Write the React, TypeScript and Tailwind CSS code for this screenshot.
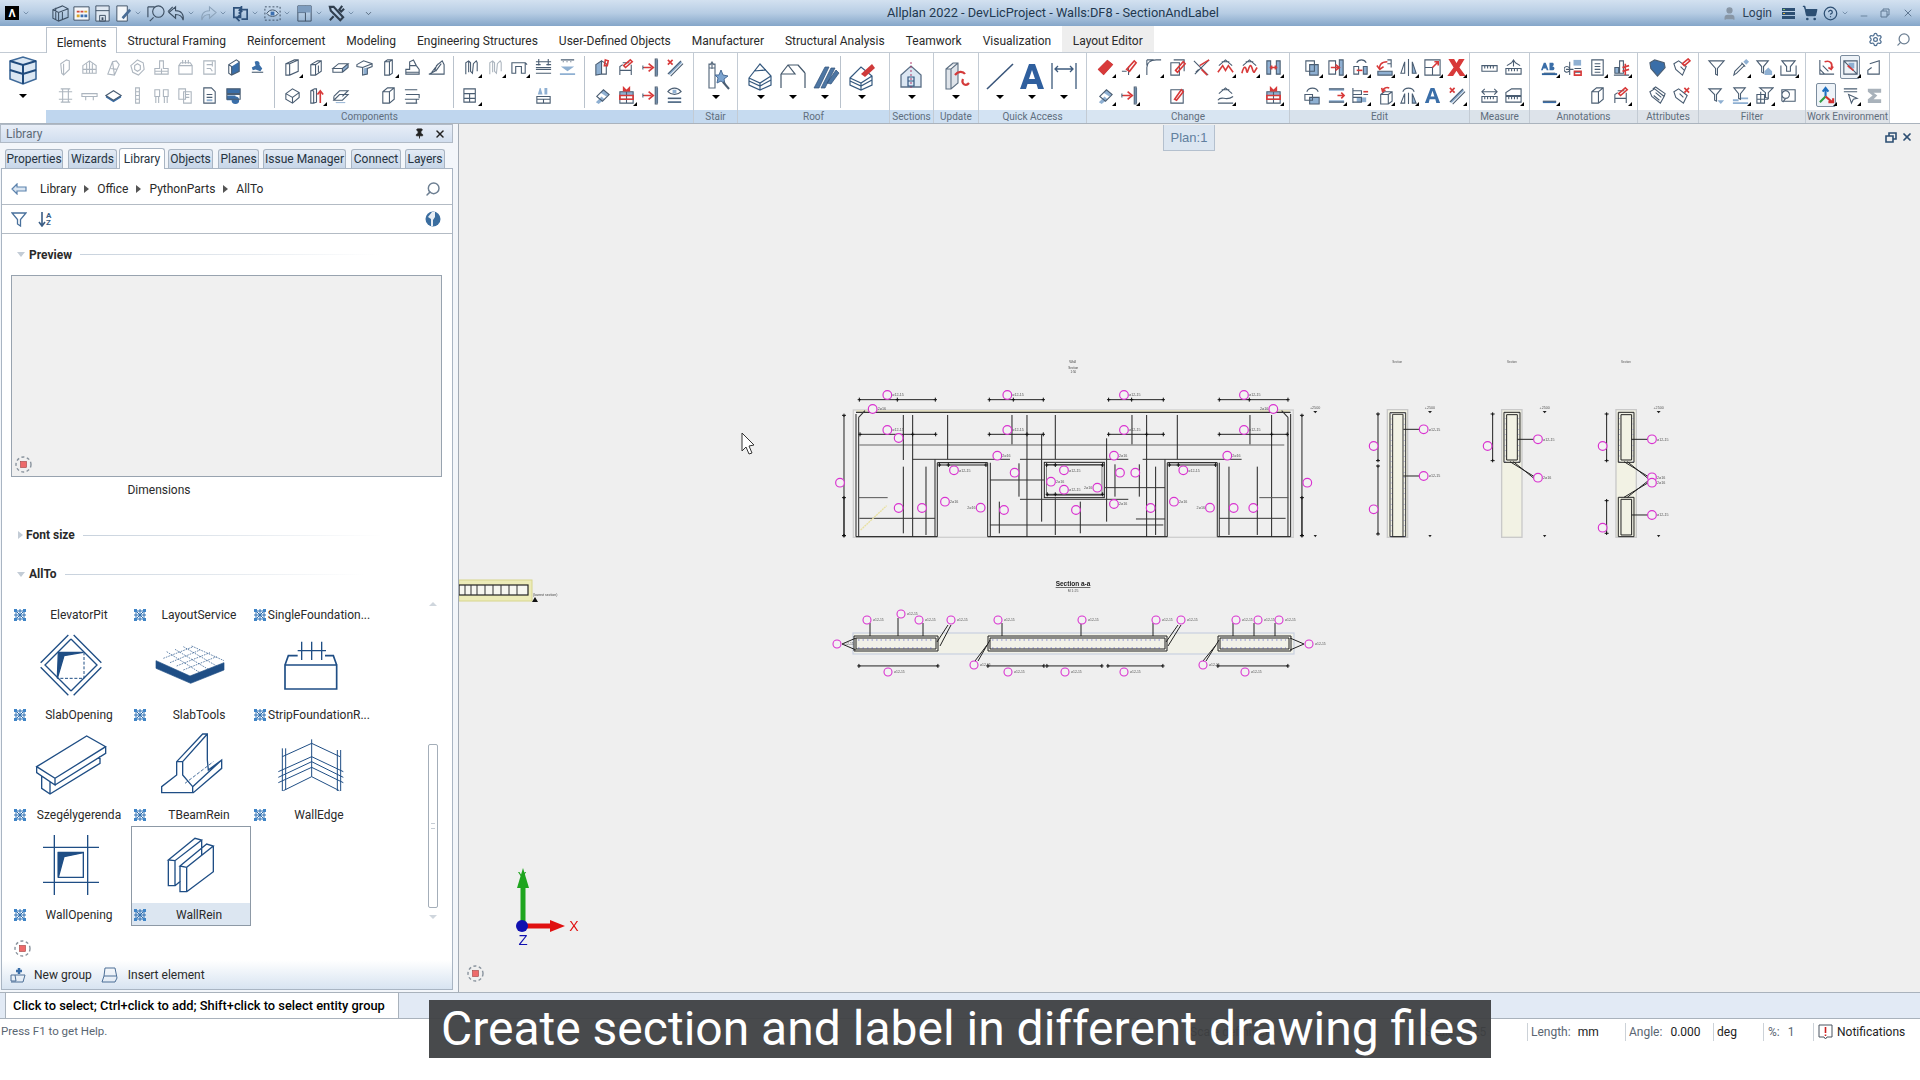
import { ReactNode } from 'react';
import { ChevronDown, Settings, Search, Pin, X, Minus, CircleHelp, ShoppingCart, User } from 'lucide-react';

// small ribbon glyphs, 20x20: [stroke, fill, red]
const ICONS: Record<string, [string, string?, string?]> = {
  wall: ['M6 16 L5 6 L11 2 L14 3 L14 12 L8 18 Z M8 6 L8 18'],
  rib: ['M3 8 L10 3 L17 8 V16 H3 Z M3 12 H17 M7 6 V16 M10 3 V16 M13 6 V16'],
  stair: ['M4 17 L9 4 L13 3 L16 7 L11 18 Z M9 4 L11 18 M7 11 L14 12'],
  ring: ['M10 2 L16 5 L17 12 L11 18 L5 15 L3 8 Z M10 6 L13 8 L13 12 L10 14 L7 12 L7 8 Z'],
  found: ['M8 3 V11 H3 V17 H17 V11 H12 V3 Z M3 14 H17 M10 11 V17'],
  box: ['M3 8 H17 V17 H3 Z M3 8 L5 5 H15 L17 8 M7 2 V6 M10 2 V6 M13 2 V6'],
  doc: ['M4 3 H16 V17 H4 Z M7 7 H13 M7 11 H11 L13 14 M13 4 V9'],
  block: ['M5 7 L13 2 L16 4 V14 L8 18 L5 16 Z M5 7 L8 9 V18', 'M8 9 L16 4 V14 L8 18 Z'],
  seal: ['M4 15 H16', 'M7 4 C10 2 13 4 12 7 L15 11 L13 14 L8 12 L5 13 L4 10 L8 8 Z'],
  column: ['M5 3 H15 M5 17 H15 M7 3 V17 M13 3 V17 M3 6 H17 M3 14 H17'],
  beam: ['M2 8 H18 V11 H2 Z M6 11 V15 M14 11 V15'],
  plate: ['M2 10 L10 5 L18 10 L10 15 Z', 'M2 10 L10 15 L18 10 L18 12 L10 17 L2 12 Z'],
  pole: ['M8 2 H12 V18 H8 Z M8 6 H12 M8 10 H12 M8 14 H12'],
  piles: ['M3 4 H8 V11 H3 Z M12 4 H17 V11 H12 Z M4 11 V18 M7 11 V18 M13 11 V18 M16 11 V18'],
  docs: ['M3 3 H10 V14 H3 Z M8 6 H16 V18 H8 Z M10 9 H14 M10 12 H14'],
  sheet: ['M4 2 H12 L16 6 V18 H4 Z M7 9 H13 M7 12 H13', 'M7 14 H13 V16 H7 Z'],
  db: ['M3 3 H17 V8 H3 Z M3 9 H17 V14 H3 Z', 'M3 3 H17 V8 H3 Z M3 10 H12 V15 H3 Z M12 11 A4 4 0 1 1 12 19 A4 4 0 1 1 12 11 Z'],
  wallBox: ['M3 6 L12 2 H16 V14 L7 18 H3 Z M3 6 H7 V18 M7 6 L16 2'],
  doors: ['M4 7 L11 3 H15 V14 L9 18 H4 Z M9 7 V18 M4 7 H9 L15 3 M12 8 V15'],
  slab: ['M2 11 L8 6 H18 L12 11 Z M2 11 V15 H12 V11 M12 15 L18 10 V6', 'M12 11 L18 6 V10 L12 15 Z'],
  tee: ['M2 7 L9 3 L18 6 L18 9 L13 11 V17 L8 18 V10 L2 9 Z M8 10 L18 6', 'M9 11 L13 10 V17 L9 18 Z'],
  tall: ['M6 4 L9 2 H14 V16 L11 18 H6 Z M11 4 V18 M6 4 H11 L14 2'],
  house: ['M3 12 L7 12 L7 4 L11 2 L14 8 L17 12 V17 H3 Z M7 8 H14 M3 15 H17'],
  stairs: ['M2 17 L8 14 L10 8 L16 3 L18 7 V17 Z M5 15 L12 6 M9 14 L15 6'],
  ushape: ['M4 17 V5 L7 3 L9 5 V14 L11 16 L12 6 L15 3 L16 5 V14 M7 3 V15'],
  arch: ['M2 5 H16 V16 H12 V9 H6 V16 H2 Z M16 5 L18 7'],
  span: ['M2 4 H18 M2 16 H18 M2 10 H18 M5 1 V8 M15 1 V8 M7 7 L2 7 M13 7 L18 7 M2 12 H18'],
  dots: ['M3 2 H17 M5 4 H6 M9 4 H10 M13 4 H14', 'M3 9 H17 L10 14 Z M2 16 H18 V18 H2 Z'],
  cube: ['M3 8 L10 3 L17 7 L17 12 L10 18 L3 14 Z M3 8 L10 12 L17 7 M10 12 V18'],
  up: ['M4 5 L8 3 H10 V17 L7 18 H4 Z M7 5 V18 M4 5 H7', undefined, 'M14 18 V6 M11 9 L14 5 L17 9'],
  slabEdit: ['M3 15 L9 9 H18 L12 15 Z M3 11 L9 5 H18 L12 11 M3 11 V15', 'M5 17 H15 V18 H5 Z'],
  boxBig: ['M4 6 L9 2 H16 V14 L11 18 H4 Z M11 6 V18 M4 6 H11 L16 2'],
  layer: ['M2 4 H15 M3 9 H17 V13 M2 14 H17 M14 14 L14 18 M3 18 H15'],
  corner: ['M2 3 H14 V17 H2 Z M2 8 H14 M2 13 H14 M8 8 V17'],
  abc: ['M3 11 H17 V18 H3 Z M3 14 H17 M10 14 V18', 'M4 9 L6 2 H7 L9 9 Z M11 2 H14 V9 H11 Z'],
  colorWall: ['M3 7 L9 3 V17 L3 18 Z M9 3 L14 6 V17 H9', 'M3 7 L9 3 V17 L3 18 Z', 'M13 2 L16 3 L15 8 L12 8 Z'],
  hammer: ['M3 18 V9 L6 7 M15 18 V7 M3 13 H15 M6 5 H13', undefined, 'M7 8 L14 2 L16 4 L9 10 Z'],
  arrowBar: ['M15 1 H17 V19 H15 Z M2 10 H4 M6 10 H8 M2 8 V12', 'M15 2 H18 V18 H15 Z', 'M3 10 H11 M8 6 L13 10 L8 14'],
  xDiag: ['M3 17 L17 3 M6 19 L19 6', 'M3 16 L16 3 L18 5 L5 18 Z', 'M3 2 L8 7 M8 2 L3 7'],
  brush: ['M4 11 L11 4 L17 9 L10 16 Z', 'M3 17 L9 11 L12 14 L6 19 Z M11 4 L17 9 L14 11 L8 7 Z'],
  colors: ['M3 6 H17 V18 H3 Z M3 10 H17 M3 14 H17 M10 6 V18', 'M3 6 H17 V10 H3 Z', 'M7 2 L10 5 L13 2 V5 H7 Z M3 10 H17 V14 H3 Z'],
  eye: ['M3 6 C7 1 13 1 17 6 C13 10 7 10 3 6 Z M3 13 H17 M3 17 H17', 'M3 12 H17 V14 H3 Z M3 16 H17 V18 H3 Z M8 4 H12 V8 H8 Z', undefined],
  eraser: ['M3 12 L12 3 L17 7 L8 17 Z', undefined, 'M3 12 L12 3 L17 7 L8 17 Z'],
  pinRed: ['M2 14 L7 14 M9 9 V18', undefined, 'M7 12 L15 3 L17 5 L10 14 Z'],
  fillet: ['M3 18 V10 C3 5 7 2 13 2 H18 M3 2 H10 M3 2 V8'],
  boxRed: ['M3 5 H12 V18 H3 Z M6 2 H17 V14', undefined, 'M8 13 L16 4 L18 6 L10 15 Z'],
  scissor: ['M2 3 L17 18 M18 2 L3 17 M7 12 L4 15', undefined, 'M8 8 L18 2 M10 12 L16 18'],
  hatRed: ['M6 4 H14 M3 8 L10 2 L17 8', undefined, 'M2 15 L7 8 L10 13 L13 8 L18 15'],
  hatWave: ['M6 4 H14 M3 8 L10 2 L17 8', undefined, 'M2 16 C4 8 6 8 7 14 C8 18 9 8 11 8 C13 8 13 15 15 15 L18 10'],
  hBeam: ['M3 3 H7 V17 H3 Z M13 3 H17 V17 H13 Z', 'M3 3 H7 V17 H3 Z M13 3 H17 V17 H13 Z', 'M6 10 H14 M8 8 V12 M12 8 V12'],
  pencilBox: ['M3 4 H16 V18 H3 Z', undefined, 'M7 14 L14 4 L16 6 L9 15 Z'],
  hatWave2: ['M3 8 L10 2 L17 8 M6 4 H14 M2 18 H18 M2 15 C6 9 10 17 18 11'],
  copy: ['M3 3 H12 V14 H3 Z M7 7 H16 V18 H7 Z', 'M7 7 H16 V18 H7 Z'],
  dashMove: ['M2 3 H9 V17 H2 Z M13 2 H17 V18 H13 Z', 'M13 2 H17 V18 H13 Z', 'M4 10 H12 M9 7 L13 10 L9 13'],
  hatArrow: ['M6 5 C8 1 14 1 16 5 M3 9 H8 V17 H3 Z M13 9 H17 V17 H13 Z', 'M13 9 H17 V17 H13 Z', 'M6 13 H12'],
  rotate: ['M13 2 H17 V10 M13 6 H17 M3 14 H18 V18 H3 Z', 'M3 14 H18 V18 H3 Z', 'M13 4 C6 4 4 8 5 12 M2 8 L5 12 L9 9'],
  mirror: ['M10 1 V19 M14 4 V16 H18 Z M6 4 V16 H2 Z', 'M14 4 V16 H18 Z'],
  scale: ['M2 2 H18 V18 H2 Z M2 10 H10 V18', undefined, 'M10 10 L16 4 M12 4 H16 V8'],
  bigX: ['', undefined, 'M3 2 L7 2 L10 7 L13 2 L17 2 L12 10 L18 18 L14 18 L10 12 L6 18 L2 18 L8 10 Z'],
  copyHat: ['M4 6 C6 1 14 1 16 6 M2 9 H10 V15 H2 Z M7 12 H17 V19 H7 Z', 'M7 12 H17 V19 H7 Z'],
  moveH: ['M2 3 H18 M2 17 H18', 'M2 3 H18 V5 H2 Z M2 15 H18 V17 H2 Z', 'M11 10 H18 M15 7 L18 10 L15 13'],
  splitH: ['M2 2 V18 M2 5 H11 V9 H2 M2 12 H11 V17 H2 M18 9 H13', 'M6 12 H16 V17 H6 Z', 'M13 6 H18'],
  cubeRot: ['M6 9 L10 6 H18 V16 L14 19 H6 Z M14 9 V19 M6 9 H14 L18 6', undefined, 'M8 5 C9 2 12 1 15 2 M7 2 L8 6 L11 4'],
  mirrorHat: ['M4 6 C6 1 14 1 16 6 M10 7 V19 M14 8 V18 H18 Z M6 8 V18 H2 Z', 'M14 8 V18 H18 Z'],
  bigA: ['', 'M2 18 L8 2 H12 L18 18 H14 L13 14 H7 L6 18 Z M8 11 H12 L10 5 Z'],
  ruler: ['M2 8 H18 V14 H2 Z M5 8 V11 M8 8 V11 M11 8 V11 M14 8 V11'],
  rulerUp: ['M2 11 H18 V17 H2 Z M5 11 V14 M8 11 V14 M11 11 V14 M14 11 V14 M10 9 V3 M8 5 L10 2 L12 5 M3 8 L8 5 M17 8 L12 5'],
  rulerSpan: ['M2 11 H18 V17 H2 Z M5 11 V14 M8 11 V14 M11 11 V14 M14 11 V14 M2 6 H18 M5 3 L2 6 L5 9 M15 3 L18 6 L15 9'],
  area: ['M2 11 H18 V17 H2 Z M5 11 V14 M8 11 V14 M11 11 V14 M14 11 V14 M2 10 V7 L8 3 H18 V10 Z'],
  abcT: ['M4 16 H16', 'M1 13 L4 5 H6 L9 13 H7 L6.5 11 H3.5 L3 13 Z M10 5 H13 C15 5 15 8 13 9 C16 9 16 13 13 13 H10 Z'],
  abcPin: ['M6 4 V18 M2 12 H10 M6 12 A3 3 0 1 1 6 11.9 M11 15 H18 M11 11 H18', 'M10 2 H18 V8 H10 Z', 'M11 14 H18 V18 H11 Z'],
  docLines: ['M4 2 H16 V18 H4 Z M7 6 H13 M7 9 H13 M7 12 H13 M7 15 H13'],
  chart: ['M2 18 H18 M3 10 H7 V16 H3 Z M8 3 H12 V16 H8 Z', 'M3 10 H7 V16 H3 Z', 'M14 6 V18 M11 14 L18 12 M11 10 L18 8'],
  n123: ['M3 16 H17', 'M3 16 H17 V18 H3 Z'],
  tagPlus: ['M2 5 L7 2 L17 5 L18 10 L10 19 L3 11 Z', 'M2 5 L7 2 L17 5 L18 10 L10 19 L3 11 Z'],
  tagRed: ['M2 6 L7 3 L15 9 L11 18 L4 12 Z M9 9 L13 13', undefined, 'M11 6 L17 1 L19 3 L13 8 Z'],
  tags: ['M2 6 L7 3 L17 11 L13 18 L4 11 Z M5 3 L8 1 L18 8 L17 11 M8 7 L14 12 M6 10 L12 15'],
  tagX: ['M2 6 L7 3 L16 10 L12 18 L4 12 Z M8 8 L12 12', undefined, 'M13 2 L18 7 M18 2 L13 7'],
  f: ['M2 3 H18 L11 11 V18 L9 17 V11 Z'],
  dropper: ['M3 18 L4 14 L12 6 L14 8 L6 16 Z M11 5 L15 9', 'M13 4 L16 1 L19 4 L16 7 Z'],
  home: ['M2 3 H14 L9 9 V16 L7 15 V9 Z', 'M10 14 L14 10 L18 14 V18 H10 Z'],
  fTray: ['M3 3 H17 L12 9 V14 H8 V9 Z M2 8 V18 H18 V8'],
  fDown: ['M2 3 H15 L10 9 V16 L8 15 V9 Z', 'M11 15 H18 L14.5 19 Z'],
  fStack: ['M3 2 H15 L10 8 V14 L8 13 V8 Z', 'M2 14 H8 V16 H2 Z M10 12 H18 V14 H10 Z M2 17 H18 V19 H2 Z'],
  fBox: ['M5 2 H19 L14 7 V13 L11 12 V7 Z M2 9 H10 V18 H2 Z M6 6 V18 M2 14 H14'],
  fSearch: ['M3 16 V4 H12 M3 4 H17 V16 H3 M7 13 A4 4 0 1 1 7.1 13 M4 17 L7 13'],
  cornerRot: ['M3 2 V17 H18 M3 12 L8 17 M6 8 L12 14', undefined, 'M8 4 C14 2 17 6 15 11 M12 10 L15 12 L17 9'],
  zoomBox: ['M3 3 H17 V17 H3 Z M3 3 L17 17', 'M8 5 H14 V11 H8 Z', 'M7 8 L13 13'],
  eyeShape: ['M5 6 L15 3 V17 H3 V13 L7 10'],
  axes: ['', '', ''],
  cursor: ['M3 3 H17 M3 6 H17 M8 9 L11 18 L13 14 L17 13 Z'],
  sigma: ['', 'M3 3 H17 V7 H9 L13 10 L9 14 H17 V18 H3 V14 L8 10 L3 6 Z'],
};

const DARK_FILL = ['block', 'seal', 'db', 'plate', 'abcT', 'n123', 'bigA', 'sigma', 'tagPlus'];

function Ico({ n, size = 19, faded = false }: { n: string; size?: number; faded?: boolean }) {
  const [d, f, r] = ICONS[n] ?? [''];
  const fill = n === 'sigma' ? '#a9b2bb' : DARK_FILL.includes(n) ? '#3a6ea8' : '#8fb0d2';
  return (
    <svg width={size} height={size} viewBox="0 0 20 20" fill="none" className={faded ? 'opacity-45' : ''}>
      {f && <path d={f} fill={fill} />}
      {d && <path d={d} stroke="#4a5d72" strokeWidth="1.15" />}
      {r && <path d={r} stroke="#d83a3a" strokeWidth="1.7" fill={n === 'bigX' || n === 'eraser' ? '#d83a3a' : 'none'} />}
      {n === 'abcT' && <path d="M2 17 H18" stroke="#30639c" strokeWidth="2" />}
      {n === 'axes' && (
        <g strokeWidth="2.2">
          <path d="M9 11 V3 M6 6 L9 2 L12 6" stroke="#1f6fbf" />
          <path d="M9 11 L3 17" stroke="#2f9e44" />
          <path d="M9 11 L16 17 M12 17 H17 V13" stroke="#d32f2f" />
        </g>
      )}
    </svg>
  );
}

function Cell({ spec }: { spec: string }) {
  const drop = spec.endsWith('*');
  const faded = spec.startsWith('~');
  const n = spec.replace(/[~*!]/g, '');
  const active = spec.includes('!');
  return (
    <div className="relative w-[24px] h-[28px] flex items-center justify-center">
      {active && <div className="absolute inset-[2px] rounded-[2px] border border-[#7b8c9e] bg-[#eef3f8]" />}
      {n && (
        <div className="relative">
          <Ico n={n} faded={faded} />
        </div>
      )}
      {drop && <span className="absolute right-[1px] bottom-[3px] w-0 h-0 border-l-[4px] border-b-[4px] border-l-transparent border-b-black" />}
    </div>
  );
}

function Grid({ cols, items }: { cols: string; items: string[] }) {
  return (
    <div className={`grid ${cols} auto-rows-[28px] shrink-0`}>
      {items.map((s, i) => (
        <Cell key={i} spec={s} />
      ))}
    </div>
  );
}

const Sep = () => <div className="w-px h-[52px] mx-[5px] mt-[3px] bg-[#b9c2cc] shrink-0" />;

const BIG: Record<string, ReactNode> = {
  stair: (
    <>
      <path d="M8 3 H14 V27 H8 Z M8 7 H14 M11 1 V8 M9 4 L11 1 L13 4" stroke="#5d6f82" strokeWidth="1.2" />
      <path d="M20 9 L22 14 L27 15 L23 18 L24 23 L20 20 L16 22 L17 17 L14 14 L18 14 Z" fill="#7ba3cf" stroke="#4a6d96" />
      <path d="M22 21 L28 28" stroke="#4a5d72" strokeWidth="2" />
    </>
  ),
  roof1: <path d="M3 17 L14 3 L25 15 V24 L14 29 L3 24 Z M3 17 L14 22 L25 15 M14 22 V29 M3 20 L14 25 L25 19 M8 10 L20 9" stroke="#35597f" strokeWidth="1.2" />,
  roof2: <path d="M3 13 L10 4 H20 L27 12 M3 13 V27 M27 12 V27 M10 4 L17 13 L3 13 M20 4 L27 12" stroke="#44586c" strokeWidth="1.2" />,
  roof3: <path d="M4 27 L15 6 H19 L9 27 Z M11 27 L21 7 H25 L15 27 Z M17 22 L26 9 L29 12 L21 23 Z" fill="#4d76a3" stroke="#2f5078" strokeWidth=".7" />,
  roof4: (
    <>
      <path d="M3 17 L14 6 L25 15 V24 L14 29 L3 24 Z M3 17 L14 22 L25 15 M14 22 V29 M3 20 L14 25 L25 19" stroke="#35597f" strokeWidth="1.2" />
      <path d="M14 13 L25 3 L28 7 L18 16 Z" fill="#cf3a3a" />
    </>
  ),
  section: (
    <>
      <path d="M4 14 L14 5 L24 14 V26 H4 Z" fill="#dbe6f2" stroke="#5a6f86" strokeWidth="1.3" />
      <path d="M14 1 V29" stroke="#b03a6a" strokeWidth="1" strokeDasharray="2 2" />
      <path d="M11 16 H17 V25 H11 Z M11 20 H17" stroke="#31557f" strokeWidth="1.2" />
    </>
  ),
  update: (
    <>
      <path d="M5 8 L12 2 H17 V22 L10 28 H5 Z M10 8 V28 M5 8 H10 L17 2" fill="#dfe4ea" stroke="#5d6f82" strokeWidth="1.1" />
      <path d="M14 14 C17 10 22 10 24 13 M22 18 C20 23 25 26 28 22" stroke="#d43a3a" strokeWidth="2.2" />
    </>
  ),
  line: <path d="M2 28 L28 3" stroke="#39557a" strokeWidth="1.6" />,
  textA: <path d="M3 28 L12 3 H18 L27 28 H21 L19.5 23 H10.5 L9 28 Z M12 18 H18 L15 9 Z" fill="#2f5f9e" />,
  dim: <path d="M3 2 V28 M27 2 V28 M6 8 H24 M9 5 L6 8 L9 11 M21 5 L24 8 L21 11" stroke="#3d5a7c" strokeWidth="1.3" />,
};

function BigCell({ n }: { n: string }) {
  return (
    <div className="w-[32px] flex flex-col items-center pt-[8px] shrink-0">
      <svg width="30" height="30" viewBox="0 0 30 30" fill="none">{BIG[n]}</svg>
      <span className="mt-[4px] w-0 h-0 border-x-[4px] border-t-[4px] border-x-transparent border-t-black" />
    </div>
  );
}

function Group({ label, w, bg, pl, children }: { label: string; w: string; bg: string; pl: string; children: ReactNode }) {
  return (
    <div className={`${w} flex flex-col border-r border-[#c3cbd4] shrink-0`}>
      <div className={`h-[58px] flex ${pl}`}>{children}</div>
      <div className={`h-[13px] ${bg} text-center text-[10px] leading-[13px] text-[#5f6e7d]`}>{label}</div>
    </div>
  );
}

const TABS = ['Structural Framing', 'Reinforcement', 'Modeling', 'Engineering Structures', 'User-Defined Objects', 'Manufacturer', 'Structural Analysis', 'Teamwork', 'Visualization'];

function TitleBar() {
  const tool = (node: ReactNode, caret: boolean, key: number) => (
    <div key={key} className={`flex items-center ${caret ? 'w-[32px]' : 'w-[21px]'}`}>
      <div className="w-[21px] flex justify-center">{node}</div>
      {caret && <ChevronDown size={8} className="text-[#5b7693]" />}
    </div>
  );
  const s = (d: ReactNode) => (
    <svg width="19" height="19" viewBox="0 0 20 20" fill="none">{d}</svg>
  );
  const items: [ReactNode, boolean][] = [
    [s(<path d="M2 6 L12 2 L18 5 V14 L8 18 L2 15 Z M2 6 L8 9 L18 5 M8 9 V18 M5 4 V16 M12 7 V16" stroke="#3e5064" strokeWidth="1.1" />), false],
    [s(<><path d="M2 3 H18 V17 H2 Z" fill="#f4f7fa" stroke="#3e5064" /><path d="M5 7 H8 V9 H5 Z M9 7 H12 V9 H9 Z" fill="#d04a3a" /><path d="M13 7 H16 V9 H13 Z M5 11 H8 V14 H5 Z" fill="#d9a52b" /><path d="M9 11 H12 V14 H9 Z M13 11 H16 V14 H13 Z" fill="#3b6fb0" /></>), false],
    [s(<><path d="M3 2 H17 V18 H3 Z" fill="#dfe8f2" stroke="#3e5064" /><path d="M3 7 H17 M7 12 H13 V18 H7 Z" stroke="#3e5064" /><path d="M9 14 H11 V17 H9 Z" fill="#3e5064" /></>), false],
    [s(<><path d="M3 2 H14 V18 H3 Z" fill="#f4f7fa" stroke="#3e5064" /><path d="M8 14 L16 5 L18 7 L10 16 Z" fill="#4a6d96" /></>), true],
    [s(<path d="M4 18 L8 14 M13 8 m-6 0 a6 6 0 1 0 12 0 a6 6 0 1 0 -12 0 M2 3 H9 M2 3 V14" stroke="#3e5064" strokeWidth="1.2" />), false],
    [s(<path d="M9 3 L2 9 L9 15 V11 C13 11 16 13 17 17 C18 11 15 7 9 7 Z M6 3 L1 8" stroke="#3e5064" strokeWidth="1.2" />), true],
    [s(<path d="M11 3 L18 9 L11 15 V11 C7 11 4 13 3 17 C2 11 5 7 11 7 Z" stroke="#8ca3ba" strokeWidth="1.1" />), true],
    [s(<path d="M3 4 H10 V14 H3 Z M11 6 H17 V16 H11 M11 2 V8 M8 10 L11 8 L8 6 M9 18 L6 15 L9 12" stroke="#2e517b" strokeWidth="1.8" />), true],
    [s(<><path d="M2 3 H18 V17 H2 Z" stroke="#3e5064" strokeDasharray="2 2" /><path d="M4 10 C7 5 13 5 16 10 C13 14 7 14 4 10 Z" fill="#cfe0f0" stroke="#3e5064" /><path d="M8 8 H12 V12 H8 Z" fill="#3b6fb0" /></>), true],
    [s(<><path d="M3 2 H17 V18 H3 Z M3 9 H11 M11 2 V18" stroke="#3e5064" /><path d="M3 2 H17 V9 H3 Z" fill="#7e9dbf" /></>), true],
    [s(<path d="M3 3 L7 3 L17 14 L14 17 L4 7 Z M16 2 L13 6 L15 8 L18 5 M7 13 L3 17" stroke="#303e4e" strokeWidth="2.2" />), true],
    [<ChevronDown size={9} className="text-[#3e5064]" />, false],
  ];
  return (
    <div className="h-[26px] flex items-center bg-gradient-to-b from-[#d3e1f0] via-[#b7cde4] to-[#85a6c9] text-[#22384f]">
      <div className="w-[887px] flex items-center shrink-0">
        <div className="ml-[5px] w-[14px] h-[14px] bg-black flex items-center justify-center text-white text-[11px] leading-none font-bold">Λ</div>
        <ChevronDown size={8} className="ml-[3px] text-[#5b7693]" />
        <div className="ml-[20px] flex items-center">{items.map((it, i) => tool(it[0], it[1], i))}</div>
      </div>
      <div className="text-[12.8px]">Allplan 2022 - DevLicProject - Walls:DF8 - SectionAndLabel</div>
      <div className="flex-1 flex items-center justify-end text-[#2c4156]">
        <User size={15} fill="#8896a5" className="text-[#8896a5] mr-[5px]" />
        <span className="text-[12px] mr-[9px]">Login</span>
        <svg width="15" height="15" viewBox="0 0 15 15" className="mr-[6px]"><path d="M1 2 H14 V5 H1 Z M1 6 H14 V9 H1 Z M1 10 H14 V13 H1 Z" fill="#2d4f73" /><path d="M2 3 H4 V4 H2 Z" fill="#7fc16a" /><path d="M2 7 H4 V8 H2 Z" fill="#e0b23a" /></svg>
        <ShoppingCart size={16} className="text-[#2d4f73] mr-[5px]" fill="#2d4f73" />
        <CircleHelp size={15} className="text-[#2d4f73]" />
        <ChevronDown size={8} className="ml-[3px] mr-[10px] text-[#5b7693]" />
        <Minus size={10} className="mr-[11px] mt-[6px] text-[#5f7893]" />
        <svg width="10" height="10" viewBox="0 0 10 10" fill="none" className="mr-[12px]"><path d="M1 3 H7 V9 H1 Z M3 3 V1 H9 V7 H7" stroke="#5f7893" /></svg>
        <X size={12} className="mr-[6px] text-[#5f7893]" />
      </div>
    </div>
  );
}

function Ribbon() {
  return (
    <div className="flex flex-col">
      <div className="h-[26px] flex pl-[46px] items-end bg-white text-[12px] text-[#2a2a2a]">
        <div className="h-[26px] w-[71px] pt-[4px] flex items-center justify-center border-x border-t border-[#b9c2cc] bg-white relative z-10 -mb-px">Elements</div>
        {TABS.map((t) => (
          <div key={t} className="h-[26px] pt-[4px] px-[10.5px] flex items-center">{t}</div>
        ))}
        <div className="h-[26px] w-[92px] pt-[4px] flex items-center justify-center bg-[#eeeeee]">Layout Editor</div>
        <div className="ml-auto h-[26px] flex items-center pr-[9px]">
          <Settings size={15} className="text-[#4f6f92] mr-[13px]" />
          <Search size={15} className="text-[#6c7f93] -scale-x-100" />
        </div>
      </div>
      <div className="flex border-t border-[#c3cbd4] h-[71px]">
        <div className="w-[46px] flex flex-col items-center shrink-0">
          <svg width="32" height="30" viewBox="0 0 32 30" fill="none" className="mt-[2px]">
            <path d="M3 6 L16 2 L29 6 V24 L16 29 L3 24 Z" fill="#dbe7f3" stroke="#3f6a9a" strokeWidth="1.6" />
            <path d="M3 6 L16 10 L29 6 M16 10 V29 M3 15 L16 19 L29 15" stroke="#1f4a7c" strokeWidth="2" />
          </svg>
          <span className="mt-[9px] w-0 h-0 border-x-[4px] border-t-[4px] border-x-transparent border-t-black" />
        </div>
        <Group label="Components" w="w-[648px]" bg="bg-[#bfd6ee]" pl="pl-[7px]">
          <Grid cols="grid-cols-[repeat(9,24px)]" items={['~wall', '~rib', '~stair', '~ring', '~found', '~box', '~doc', 'block', 'seal', '~column', '~beam', 'plate', '~pole', '~piles', '~docs', 'sheet', 'db', '']} />
          <Sep />
          <Grid cols="grid-cols-[repeat(7,24px)]" items={['wallBox*', 'doors', 'slab', 'tee', 'tall*', 'house', 'stairs', 'cube', 'up*', 'slabEdit', '', 'boxBig', 'layer', '']} />
          <Sep />
          <Grid cols="grid-cols-[repeat(5,24px)]" items={['ushape*', '~ushape*', 'arch*', 'span', 'dots', 'corner*', '', '', 'abc', '']} />
          <Sep />
          <Grid cols="grid-cols-[repeat(4,24px)]" items={['colorWall', 'hammer', 'arrowBar', 'xDiag', 'brush', 'colors*', 'arrowBar', 'eye']} />
        </Group>
        <Group label="Stair" w="w-[44px]" bg="bg-[#c4d9ef]" pl="justify-center">
          <BigCell n="stair" />
        </Group>
        <Group label="Roof" w="w-[152px]" bg="bg-[#c6dbf0]" pl="pl-[7px]">
          <BigCell n="roof1" />
          <BigCell n="roof2" />
          <BigCell n="roof3" />
          <div className="w-px h-[52px] mx-[5px] mt-[3px] -ml-[1px] bg-[#b9c2cc]" />
          <BigCell n="roof4" />
        </Group>
        <Group label="Sections" w="w-[44px]" bg="bg-[#cbdef1]" pl="justify-center">
          <BigCell n="section" />
        </Group>
        <Group label="Update" w="w-[45px]" bg="bg-[#cfe0f2]" pl="justify-center">
          <BigCell n="update" />
        </Group>
        <Group label="Quick Access" w="w-[108px]" bg="bg-[#d3e3f3]" pl="pl-[5px]">
          <BigCell n="line" />
          <BigCell n="textA" />
          <BigCell n="dim" />
        </Group>
        <Group label="Change" w="w-[203px]" bg="bg-[#d8e5f2]" pl="pl-[6px]">
          <Grid cols="grid-cols-[repeat(8,24px)]" items={['eraser*', 'pinRed*', 'fillet*', 'boxRed', 'scissor', 'hatRed*', 'hatWave*', 'hBeam*', 'brush*', 'arrowBar*', '', 'pencilBox', '', 'hatWave2*', '', 'colors*']} />
        </Group>
        <Group label="Edit" w="w-[180px]" bg="bg-[#d8e2ec]" pl="pl-[10px]">
          <Grid cols="grid-cols-[repeat(7,24px)]" items={['copy*', 'dashMove*', 'hatArrow*', 'rotate*', 'mirror*', 'scale*', 'bigX*', 'copyHat', 'moveH*', 'splitH*', 'cubeRot*', 'mirrorHat*', 'bigA', 'xDiag*']} />
        </Group>
        <Group label="Measure" w="w-[60px]" bg="bg-[#dbe3ea]" pl="pl-[7px]">
          <Grid cols="grid-cols-[repeat(2,24px)]" items={['ruler', 'rulerUp', 'rulerSpan', 'area*']} />
        </Group>
        <Group label="Annotations" w="w-[108px]" bg="bg-[#dde3ea]" pl="pl-[7px]">
          <Grid cols="grid-cols-[repeat(4,24px)]" items={['abcT*', 'abcPin', 'docLines*', 'chart*', 'n123*', '', 'boxBig', 'hammer*']} />
        </Group>
        <Group label="Attributes" w="w-[61px]" bg="bg-[#dee3e9]" pl="pl-[7px]">
          <Grid cols="grid-cols-[repeat(2,24px)]" items={['tagPlus', 'tagRed', 'tags', 'tagX']} />
        </Group>
        <Group label="Filter" w="w-[107px]" bg="bg-[#dee3e9]" pl="pl-[5px]">
          <Grid cols="grid-cols-[repeat(4,24px)]" items={['f', 'dropper*', 'home*', 'fTray*', 'fDown', 'fStack*', 'fBox*', 'fSearch']} />
        </Group>
        <Group label="Work Environment" w="w-[84px]" bg="bg-[#dfe3e8]" pl="pl-[8px]">
          <Grid cols="grid-cols-[repeat(3,24px)]" items={['cornerRot', '!zoomBox*', 'eyeShape', '!axes*', 'cursor*', 'sigma']} />
        </Group>
      </div>
      <div className="h-px bg-[#aab3bd]" />
    </div>
  );
}

// parts icon next to each library entry
function PartIcon() {
  return (
    <svg width="14" height="14" viewBox="0 0 14 14" fill="none">
      <path d="M3 3 H11 V11 H3 Z M1 7 H13 M7 1 V13 M3 3 L11 11 M11 3 L3 11" stroke="#2f6fb0" strokeWidth="1" />
      <path d="M1 1 H4 V4 H1 Z M10 1 H13 V4 H10 Z M1 10 H4 V13 H1 Z M10 10 H13 V13 H10 Z" fill="#3f85c8" />
    </svg>
  );
}

function Crosshair({ pale = false }: { pale?: boolean }) {
  return (
    <svg width="17" height="17" viewBox="0 0 17 17" fill="none">
      <circle cx="8.5" cy="8.5" r="7.5" stroke="#8a949e" strokeWidth="1.4" strokeDasharray="3 2.5" />
      <rect x="5.5" y="5.5" width="6" height="6" fill={pale ? '#eda0a0' : '#ee6a6a'} stroke="#a04040" strokeWidth=".6" />
    </svg>
  );
}

const BLUE = '#1f4e85';
const LIB_ICONS: Record<string, ReactNode> = {
  SlabOpening: (
    <svg width="120" height="77" viewBox="33 108 360 231" fill="none" stroke={BLUE} strokeWidth="4">
      <path d="M205 135 L122 218 M221 135 L304 218 M304 232 L221 316 M122 232 L205 316 M213 147 L135 225 L213 303 M213 147 L291 225 L213 303" />
      <path d="M172 265 L175 187 L250 187 L192 197 Z" fill={BLUE} />
      <path d="M252 187 V265 H172" strokeWidth="3" strokeDasharray="9 5" />
    </svg>
  ),
  SlabTools: (
    <svg width="120" height="77" viewBox="393 108 360 231" fill="none" stroke={BLUE} strokeWidth="2">
      <path d="M490 205 L580 170 M510 218 L600 180 M530 228 L630 188 M550 240 L650 200 M500 185 L600 248 M525 178 L625 238 M550 170 L650 228 M575 168 L672 212" strokeDasharray="5 3" />
      <path d="M468 212 L570 258 L672 218 V240 L572 280 L468 235 Z" fill={BLUE} />
    </svg>
  ),
  StripFoundationR: (
    <svg width="120" height="77" viewBox="753 108 360 231" fill="none" stroke={BLUE} strokeWidth="5">
      <path d="M855 225 H1010 V297 H855 Z M855 225 L865 197 H893 M975 197 H1000 L1010 225" />
      <path d="M905 155 V210 M935 155 V210 M965 155 V210 M893 182 H978" strokeWidth="4" />
    </svg>
  ),
  'Szeg\u00e9lygerenda': (
    <svg width="120" height="77" viewBox="33 408 360 231" fill="none" stroke={BLUE} strokeWidth="4">
      <path d="M110 530 L260 438 L317 470 L165 565 Z M110 530 V548 L165 585 V565 M165 585 L317 490 V470 M125 558 V595 L150 612 L300 520 V498 M150 612 V575" />
    </svg>
  ),
  TBeamRein: (
    <svg width="120" height="77" viewBox="393 408 360 231" fill="none" stroke={BLUE} strokeWidth="4">
      <path d="M485 608 V590 L530 555 V515 L608 432 H622 V510 L625 540 L665 510 V535 L580 608 Z M485 608 H580 M530 515 H548 V555 L578 590 V608 M548 515 L622 432 M578 590 L665 510" />
      <path d="M555 580 L640 515" strokeWidth="2.5" strokeDasharray="10 5" />
    </svg>
  ),
  WallEdge: (
    <svg width="120" height="77" viewBox="753 408 360 231" fill="none" stroke={BLUE} strokeWidth="3">
      <path d="M847 500 L935 460 L1020 500 M835 545 L935 500 L1030 545 M835 562 L935 515 L1030 562 M835 578 L935 532 L1030 578 M850 602 L935 560 L1018 602 M847 475 V603 M857 475 V600 M935 448 V560 M1012 480 V603 M1022 480 V603" />
    </svg>
  ),
  WallOpening: (
    <svg width="120" height="77" viewBox="33 708 360 231" fill="none" stroke={BLUE} strokeWidth="4">
      <path d="M129 772 H297 M129 877 H297 M163 735 V915 M263 735 V915 M175 787 H250 V862 H175 Z" />
      <path d="M175 862 V788 H250 L192 800 Z" fill={BLUE} />
    </svg>
  ),
  WallRein: (
    <svg width="120" height="77" viewBox="393 708 360 231" fill="none" stroke={BLUE} strokeWidth="4">
      <path d="M505 810 L585 745 L605 750 L525 812 Z M505 810 V887 H525 V812 M525 887 L542 873 M605 750 V795 M540 828 L620 762 L640 768 L560 832 Z M540 828 V905 H560 V832 M560 905 L640 845 V768" />
    </svg>
  ),
};

function LibCell({ label, selected = false, iconKey }: { label: string; selected?: boolean; iconKey?: string }) {
  return (
    <div className={`w-[120px] flex flex-col ${selected ? 'outline outline-1 -outline-offset-1 outline-[#8d99a6]' : ''}`}>
      {iconKey && <div className="h-[77px] overflow-hidden">{LIB_ICONS[iconKey]}</div>}
      <div className={`h-[23px] flex items-center pl-[1px] text-[12px] text-[#2a2a2a] ${selected ? 'bg-[#dce6f1]' : ''}`}>
        <div className="w-[14px] ml-[1px] shrink-0"><PartIcon /></div>
        <div className="flex-1 text-center whitespace-nowrap">{label}</div>
      </div>
    </div>
  );
}

function SectionHead({ label, h, open }: { label: string; h: string; open: boolean }) {
  return (
    <div className={`${h} flex items-center`}>
      {open ? (
        <span className="ml-[15px] w-0 h-0 border-x-[4px] border-t-[5px] border-x-transparent border-t-[#c3ccd6]" />
      ) : (
        <span className="ml-[16px] w-0 h-0 border-y-[4px] border-l-[5px] border-y-transparent border-l-[#c3ccd6]" />
      )}
      <span className={`font-bold text-[12px] text-[#2a2a2a] ${open ? 'ml-[4px]' : 'ml-[3px]'}`}>{label}</span>
      <div className="ml-[8px] w-[300px] h-px bg-gradient-to-r from-[#c8d2dd] to-white" />
    </div>
  );
}

const PANEL_TABS = [
  ['Properties', 'w-[58px] ml-[5px]'],
  ['Wizards', 'w-[49px] ml-[5px]'],
  ['Objects', 'w-[45px] ml-[3px]'],
  ['Planes', 'w-[41px] ml-[5px]'],
  ['Issue Manager', 'w-[83px] ml-[4px]'],
  ['Connect', 'w-[50px] ml-[5px]'],
  ['Layers', 'w-[40px] ml-[4px]'],
];

function PanelTab({ label, cls }: { label: string; cls: string }) {
  return (
    <div className={`${cls} h-[19px] flex items-center justify-center rounded-t-[3px] border border-b-0 border-[#a9b5c3] bg-gradient-to-b from-[#e3ebf5] to-[#c7d6e8] text-[12px] text-[#26333f]`}>{label}</div>
  );
}

const Crumb = () => <span className="mx-[8px] w-0 h-0 border-y-[4px] border-l-[5px] border-y-transparent border-l-[#555]" />;

function LeftPanel() {
  return (
    <div className="w-[453px] shrink-0 flex flex-col pb-[2px]">
      <div className="h-[19px] shrink-0 flex items-center justify-between px-[5px] border border-[#b0bac6] bg-gradient-to-b from-[#e8eef7] to-[#d1deef] text-[12px] text-[#5d6a77]">
        <span>Library</span>
        <div className="flex items-center gap-[9px] text-[#222] pr-[1px]">
          <Pin size={11} fill="#222" />
          <X size={12} strokeWidth={3} />
        </div>
      </div>
      <div className="h-[25px] shrink-0 flex items-end">
        <PanelTab label={PANEL_TABS[0][0]} cls={PANEL_TABS[0][1]} />
        <PanelTab label={PANEL_TABS[1][0]} cls={PANEL_TABS[1][1]} />
        <div className="w-[46px] h-[21px] ml-[2px] -mb-px relative z-10 flex items-center justify-center rounded-t-[3px] border border-b-0 border-[#a9b5c3] bg-white text-[12px] text-[#26333f]">Library</div>
        {PANEL_TABS.slice(2).map((t) => (
          <PanelTab key={t[0]} label={t[0]} cls={t[1]} />
        ))}
      </div>
      <div className="flex-1 border border-[#a9b5c3] bg-white flex flex-col ml-px">
        <div className="h-[36px] pt-[5px] flex items-center border-b border-[#b3bbc4] text-[12px] text-[#2a2a2a] shrink-0">
          <svg width="16" height="12" viewBox="0 0 16 12" fill="none" className="ml-[9px] mr-[13px]"><path d="M6 1 L1 6 L6 11 V8 H15 V4 H6 Z" fill="#dbe6f2" stroke="#5d83ad" strokeWidth="1.2" /></svg>
          <span>Library</span>
          <Crumb />
          <span>Office</span>
          <Crumb />
          <span>PythonParts</span>
          <Crumb />
          <span>AllTo</span>
          <Search size={16} strokeWidth={2.2} className="ml-auto mr-[11px] text-[#6d7f92] -scale-x-100" />
        </div>
        <div className="h-[29px] flex items-center border-b border-[#b3bbc4] shrink-0">
          <svg width="16" height="16" viewBox="0 0 16 16" fill="none" className="ml-[9px]"><path d="M1 2 H15 L9.5 8.5 V15 L6.5 13 V8.5 Z" stroke="#48709c" strokeWidth="1.3" /></svg>
          <svg width="16" height="16" viewBox="0 0 16 16" fill="none" className="ml-[11px]"><path d="M4 1 V14 M1 11 L4 15 L7 11" stroke="#3a5d85" strokeWidth="1.6" /></svg>
          <div className="-ml-[8px] flex flex-col text-[8px] leading-[7px] font-bold text-[#3a5d85]"><span>A</span><span>Z</span></div>
          <svg width="16" height="16" viewBox="0 0 16 16" className="ml-auto mr-[11px]"><circle cx="8" cy="8" r="7.5" fill="#3a6d9f" /><path d="M7 1 H10 V6 L8 9 V15 L6 15 L6 8 L3 6 Z" fill="#e8eef5" /></svg>
        </div>
        <SectionHead label="Preview" h="h-[41px] shrink-0" open />
        <div className="relative ml-[9px] w-[431px] h-[202px] shrink-0 border border-[#98a3af] bg-[#f0f0f0]">
          <div className="absolute left-[3px] bottom-[3px]"><Crosshair /></div>
        </div>
        <div className="w-[314px] h-[26px] shrink-0 flex items-center justify-center text-[12px] text-[#2a2a2a]">Dimensions</div>
        <SectionHead label="Font size" h="h-[64px] shrink-0" open={false} />
        <SectionHead label="AllTo" h="h-[14px] shrink-0" open />
        <div className="h-[22px] shrink-0" />
        <div className="flex shrink-0">
          <div className="ml-[9px] w-[360px] grid grid-cols-[repeat(3,120px)]">
            <LibCell label="ElevatorPit" />
            <LibCell label="LayoutService" />
            <LibCell label="SingleFoundation..." />
            <LibCell label="SlabOpening" iconKey="SlabOpening" />
            <LibCell label="SlabTools" iconKey="SlabTools" />
            <LibCell label="StripFoundationR..." iconKey="StripFoundationR" />
            <LibCell label={'Szeg\u00e9lygerenda'} iconKey={'Szeg\u00e9lygerenda'} />
            <LibCell label="TBeamRein" iconKey="TBeamRein" />
            <LibCell label="WallEdge" iconKey="WallEdge" />
            <LibCell label="WallOpening" iconKey="WallOpening" />
            <LibCell label="WallRein" iconKey="WallRein" selected />
          </div>
          <div className="ml-[56px] w-[11px] flex flex-col items-center">
            <span className="w-0 h-0 mt-[-1px] border-x-[4px] border-b-[4px] border-x-transparent border-b-[#cfd6dd]" />
            <div className="h-[138px]" />
            <div className="relative w-[10px] h-[164px] rounded-[2px] border border-[#a4aeb9] bg-white flex items-center justify-center">
              <div className="w-[4px] h-[6px] border-y border-[#c5ccd4]" />
            </div>
            <span className="mt-[7px] w-0 h-0 border-x-[4px] border-t-[4px] border-x-transparent border-t-[#cfd6dd]" />
          </div>
        </div>
        <div className="pl-[12px] pt-[14px] shrink-0"><Crosshair /></div>
        <div className="flex-1 flex items-end bg-gradient-to-b from-white from-10% to-[#d8e4f1]">
          <div className="h-[28px] flex items-center text-[12px] text-[#2a2a2a]">
            <svg width="17" height="18" viewBox="0 0 17 18" fill="none" className="ml-[8px] mr-[7px]"><path d="M1 9 H5 L6 15 H1 Z M5 9 L15 9 L13 16 H1" stroke="#4d6f96" /><path d="M9 2 V8 M6 5 H12" stroke="#3a6ea8" strokeWidth="2.5" /></svg>
            <span>New group</span>
            <svg width="17" height="18" viewBox="0 0 17 18" fill="none" className="ml-[9px] mr-[10px]"><path d="M4 2 H14 L16 12 L14 16 H1 L3 10 H15 M4 2 L3 10" stroke="#4d6f96" /></svg>
            <span>Insert element</span>
          </div>
        </div>
      </div>
    </div>
  );
}

const C = '#d932d0';

// tiny rebar label next to a position bubble
function Bubble({ x, y, r = 13, label, left = false, fs = 11 }: { x: number; y: number; r?: number; label?: string; left?: boolean; fs?: number }) {
  return (
    <g>
      <circle cx={x} cy={y} r={r} stroke={C} strokeWidth={r * 0.27} fill="#f2f2f2" />
      {label && (
        <text x={left ? x - r - 2 : x + r + 2} y={y + fs / 3} fontSize={fs} fill="#555" textAnchor={left ? 'end' : 'start'} fontFamily="Liberation Sans, sans-serif">{label}</text>
      )}
    </g>
  );
}

function DimH({ x1, x2, y, mid }: { x1: number; x2: number; y: number; mid?: number }) {
  const tick = (x: number) => <path key={x} d={`M${x} ${y - 6} V${y + 6} M${x - 5} ${y} H${x + 5}`} stroke="#111" strokeWidth="3" />;
  return (
    <g>
      <path d={`M${x1} ${y} H${x2}`} stroke="#222" strokeWidth="3" />
      {tick(x1)}
      {tick(x2)}
      {mid !== undefined && tick(mid)}
    </g>
  );
}

function DimV({ x, y1, y2 }: { x: number; y1: number; y2: number }) {
  const tick = (y: number) => <path key={y} d={`M${x - 6} ${y} H${x + 6} M${x} ${y - 5} V${y + 5}`} stroke="#111" strokeWidth="3" />;
  return (
    <g>
      <path d={`M${x} ${y1} V${y2}`} stroke="#222" strokeWidth="3" />
      {tick(y1)}
      {tick(y2)}
    </g>
  );
}

const ELEV_BUBBLES: [number, number, string, boolean?][] = [
  [202, 165, 'ø12-15'], [562, 165, 'ø12-15'], [912, 165, 'ø12-15'], [1272, 165, 'ø12-15'], [158, 207, '2ø16'], [1360, 207, '2ø16', true],
  [202, 270, 'ø12-15'], [562, 270, 'ø12-15'], [912, 270, 'ø12-15'], [1272, 270, 'ø12-15'], [236, 294, ''],
  [532, 347, '2ø16'], [882, 347, '2ø16'], [1222, 347, '2ø16'], [402, 391, 'ø12-15'], [732, 391, 'ø12-15'], [1090, 391, 'ø12-15'],
  [584, 398, ''], [900, 398, ''], [946, 398, ''], [60, 428, ''], [1462, 428, ''], [693, 425, '2ø16'], [832, 443, '2ø16', true], [732, 449, 'ø12-15'],
  [375, 485, '2ø16'], [1062, 485, '2ø16'], [882, 492, '2ø16'], [482, 503, '2ø16', true], [1170, 503, '2ø16', true],
  [236, 504, ''], [306, 504, ''], [992, 504, ''], [1241, 504, ''], [1300, 504, ''], [552, 510, ''], [768, 510, ''],
];

const ELEV_VERT = 'M250 225 V360 M278 225 V590 M383 225 V358 M576 225 V313 M621 225 V590 M665 285 V545 M706 225 V358 M706 475 V585 M860 295 V545 M936 225 V313 M980 225 V590 M1072 225 V358 M1290 225 V313 M1355 225 V590 M250 380 V580 M318 380 V585 M1007 380 V585 M1227 380 V585 M1312 380 V585 M597 370 V470 M885 373 V470 M958 373 V470 M538 485 V580 M781 485 V580';
const ELEV_HORZ = 'M278 358 H570 M600 358 H925 M968 358 H1265 M510 420 H672 M855 443 H1035 M600 478 H925 M118 535 H345 M1198 535 H1397 M510 555 H1030 M948 537 H1035';

function Drawing() {
  return (
    <svg width="1461" height="868" viewBox="459 124 1461 868" fill="none" className="absolute inset-0 blur-[0.4px]">
      {/* elevation, coordinates at 3x */}
      <g transform="translate(820 340) scale(0.3333)">
        <text x="758" y="68" fontSize="11" textAnchor="middle" fill="#444" fontFamily="Liberation Sans, sans-serif">Wall</text>
        <text x="760" y="86" fontSize="9" textAnchor="middle" fill="#444" fontFamily="Liberation Sans, sans-serif">Section</text>
        <text x="760" y="100" fontSize="9" textAnchor="middle" fill="#444" fontFamily="Liberation Sans, sans-serif">1:50</text>
        <rect x="100" y="210" width="1320" height="382" stroke="#cfcfcf" strokeWidth="4" />
        <path d="M110 213 H1410" stroke="#e6dfa8" strokeWidth="3" />
        <path d="M108 222 V590 M116 232 V590 M1412 222 V590 M1404 232 V590 M116 232 L135 212 M1404 232 L1385 212 M352 368 V590 M345 358 V590 M503 368 V590 M511 368 V590 M1042 368 V590 M1035 358 V590 M1192 368 V590 M1198 368 V590" stroke="#333" strokeWidth="3.2" />
        <path d="M108 590 H352 M503 590 H1042 M1192 590 H1412 M352 368 H503 M1042 368 H1192 M108 217 H1412" stroke="#333" strokeWidth="3.4" />
        <rect x="673" y="367" width="180" height="106" stroke="#222" strokeWidth="3" />
        <rect x="680" y="374" width="166" height="92" stroke="#444" strokeWidth="2" />
        <path d="M118 315 H1393" stroke="#666" strokeWidth="3.2" />
        <path d={ELEV_VERT} stroke="#222" strokeWidth="3" />
        <path d={ELEV_HORZ} stroke="#333" strokeWidth="3" />
        <path d="M115 473 H203 M1318 473 H1405" stroke="#555" strokeWidth="3" />
        <path d="M122 570 L200 497" stroke="#e8e0a0" strokeWidth="4" strokeDasharray="6 2" />
        <DimH x1={118} x2={346} y={179} mid={232} />
        <DimH x1={508} x2={670} y={179} mid={580} />
        <DimH x1={866} x2={1030} y={179} mid={935} />
        <DimH x1={1198} x2={1404} y={179} mid={1288} />
        <DimH x1={120} x2={347} y={283} mid={278} />
        <DimH x1={508} x2={670} y={283} mid={621} />
        <DimH x1={866} x2={1030} y={283} mid={980} />
        <DimH x1={1198} x2={1402} y={283} mid={1355} />
        <DimH x1={358} x2={498} y={375} mid={385} />
        <DimH x1={680} x2={848} y={375} mid={706} />
        <DimH x1={1048} x2={1187} y={375} mid={1075} />
        <DimH x1={682} x2={848} y={463} mid={706} />
        <DimV x={72} y1={226} y2={587} />
        <DimV x={1446} y1={226} y2={587} />
        <DimV x={72} y1={473} y2={587} />
        <DimV x={1446} y1={473} y2={587} />
        <text x="1470" y="208" fontSize="11" fill="#555" fontFamily="Liberation Sans, sans-serif">+2500</text>
        <path d="M1480 213 H1492 L1486 220 Z M1481 585 H1491 L1486 592 Z" fill="#222" />
        {ELEV_BUBBLES.map(([x, y, t, l]) => (
          <Bubble key={`${x}-${y}`} x={x} y={y} label={t} left={l} />
        ))}
      </g>
      {/* three wall sections, also 3x */}
      <g transform="translate(1340 340) scale(0.3333)">
        {['Section', 'Section', 'Section'].map((t, i) => (
          <text key={i} x={[172, 516, 858][i]} y="68" fontSize="9" textAnchor="middle" fill="#555" fontFamily="Liberation Sans, sans-serif">{t}</text>
        ))}
        {[142, 485, 828].map((x) => (
          <rect key={x} x={x} y="209" width="61" height="383" fill="#f2f2e4" stroke="#c9c9c9" strokeWidth="4" />
        ))}
        <path d="M150 590 V218 H197 V590 Z M158 590 V223 H189 V590 M154 590 H194" stroke="#333" strokeWidth="3" />
        <path d="M492 367 V217 H540 V367 Z M500 360 V224 H532 V360 Z M835 367 V217 H882 V367 Z M843 360 V224 H875 V360 Z M835 590 V472 H882 V590 Z M843 585 V478 H875 V585 Z" stroke="#222" strokeWidth="3" />
        <path d="M154 590 V218 M193 590 V218 M496 365 V220 M536 365 V220 M839 365 V220 M879 365 V220" stroke="#3a3fb8" strokeWidth="1.5" strokeDasharray="2 14" />
        <path d="M190 268 H240 M190 408 H240 M532 298 H583 M875 298 H925 M875 525 H925 M510 365 L583 410 M520 365 L583 416 M852 365 L925 410 M862 365 L925 416 M852 472 L925 428 M862 472 L925 422" stroke="#222" strokeWidth="3" />
        <DimV x={114} y1={222} y2={362} />
        <DimV x={114} y1={378} y2={582} />
        <DimV x={458} y1={222} y2={362} />
        <DimV x={800} y1={222} y2={362} />
        <DimV x={800} y1={482} y2={580} />
        <Bubble x={251} y={268} label="ø12-15" />
        <Bubble x={251} y={408} label="ø12-15" />
        <Bubble x={594} y={298} label="ø12-15" />
        <Bubble x={594} y={413} label="2ø16" />
        <Bubble x={936} y={298} label="ø12-15" />
        <Bubble x={936} y={412} label="2ø16" />
        <Bubble x={936} y={428} label="2ø16" />
        <Bubble x={936} y={525} label="ø12-15" />
        <Bubble x={101} y={318} />
        <Bubble x={101} y={508} />
        <Bubble x={443} y={318} />
        <Bubble x={788} y={318} />
        <Bubble x={788} y={563} />
        {[270, 614, 956].map((x) => (
          <g key={x}>
            <text x={x} y="208" fontSize="11" textAnchor="middle" fill="#555" fontFamily="Liberation Sans, sans-serif">+2500</text>
            <path d={`M${x - 6} 213 H${x + 6} L${x} 220 Z M${x - 5} 585 H${x + 5} L${x} 592 Z`} fill="#222" />
          </g>
        ))}
      </g>
      {/* section a-a in page coordinates */}
      <g>
        <rect x="459" y="580" width="73" height="21" fill="#ecebb8" stroke="#d8d68c" />
        <rect x="459" y="585" width="69" height="10" fill="#f6f6f0" stroke="#222" strokeWidth="1.2" />
        <path d="M465 585 V595 M471 585 V595 M477 585 V595 M485 585 V595 M493 585 V595 M501 585 V595 M509 585 V595 M517 585 V595" stroke="#333" strokeWidth="1" />
        <path d="M532 602 L535 597 L538 602 Z" fill="#111" />
        <text x="533" y="596" fontSize="3.5" fill="#444" fontFamily="Liberation Sans, sans-serif">(lowest section)</text>
        <text x="1073" y="586" fontSize="6.5" textAnchor="middle" fill="#222" fontWeight="bold" textDecoration="underline" fontFamily="Liberation Sans, sans-serif">Section a-a</text>
        <text x="1073" y="592" fontSize="3.5" textAnchor="middle" fill="#555" fontFamily="Liberation Sans, sans-serif">M 1:25</text>
        <rect x="853" y="633" width="441" height="21" fill="#f1f1e8" stroke="#c9d0e0" strokeWidth="1.2" />
        <path d="M854 636 H938 V651 H854 Z M856 638 H936 V649 H856 Z M988 636 H1167 V651 H988 Z M990 638 H1165 V649 H990 Z M1218 636 H1291 V651 H1218 Z M1220 638 H1289 V649 H1220 Z" stroke="#222" strokeWidth="1" />
        <path d="M858 648 H934 M992 648 H1162 M1222 648 H1286 M858 640 H934 M992 640 H1162 M1222 640 H1286" stroke="#3a3fb8" strokeWidth=".6" strokeDasharray="1.5 3" />
        <path d="M870 623 V636 M898 618 V636 M923 623 V636 M1002 623 V636 M1081 623 V636 M1153 623 V636 M1233 623 V636 M1254 623 V636 M1275 623 V636 M842 644 L856 638 M842 644 L856 650 M1304 644 L1290 638 M1304 644 L1290 650 M948 625 L937 642 M951 625 L940 646 M1178 625 L1166 642 M1181 625 L1168 646 M978 661 L990 640 M975 661 L987 645 M1206 661 L1219 640 M1203 661 L1216 645" stroke="#222" strokeWidth="1" />
        <g transform="scale(0.3333)">
          <DimH x1={2577} x2={2814} y={1998} />
          <DimH x1={2964} x2={3132} y={1998} />
          <DimH x1={3141} x2={3306} y={1998} />
          <DimH x1={3324} x2={3489} y={1998} />
          <DimH x1={3654} x2={3864} y={1998} />
        </g>
        {[[867, 620], [901, 614], [919, 620], [951, 620], [998, 620], [1082, 620], [1156, 620], [1181, 620], [1236, 620], [1258, 620], [1279, 620], [837, 644], [1309, 644], [974, 665], [1203, 665], [888, 672], [1008, 672], [1065, 672], [1124, 672], [1245, 672]].map(([x, y]) => (
          <Bubble key={`${x}-${y}`} x={x} y={y} r={4} fs={3.4} label="ø12-15" />
        ))}
      </g>
      {/* coordinate axes */}
      <path d="M523 926 V885" stroke="#1fa51f" strokeWidth="5" />
      <path d="M523 868 L517 888 H529 Z" fill="#1fa51f" />
      <path d="M523 926 H552" stroke="#e01010" strokeWidth="5" />
      <path d="M565 926 L550 920 V932 Z" fill="#e01010" />
      <circle cx="522" cy="926" r="6" fill="#1010b0" />
      <text x="522" y="881" fontSize="13" fill="#1fa51f" textAnchor="middle" fontFamily="Liberation Sans, sans-serif">Y</text>
      <text x="574" y="931" fontSize="14" fill="#e01010" textAnchor="middle" fontFamily="Liberation Sans, sans-serif">X</text>
      <text x="523" y="945" fontSize="15" fill="#1010b0" textAnchor="middle" fontFamily="Liberation Sans, sans-serif">Z</text>
      {/* mouse cursor */}
      <path d="M742 433 V451 L746 447 L749 454 L752 453 L749 446 L754 445 Z" fill="#fff" stroke="#333" strokeWidth="1" />
    </svg>
  );
}

function Canvas() {
  return (
    <div className="relative flex-1 ml-[5px] border-l border-[#a3abb5] bg-[#efefef]">
      <Drawing />
      <div className="absolute left-[704px] top-[1px] w-[52px] h-[26px] flex items-center justify-center border border-t-0 border-[#b4c0ce] bg-[#dce6f1] text-[13px] text-[#617f9f] font-['Liberation_Sans',sans-serif]">Plan:1</div>
      <div className="absolute right-[7px] top-[7px] flex items-center gap-[4px]">
        <svg width="12" height="11" viewBox="0 0 12 11" fill="none"><path d="M1 4 H8 V10 H1 Z M4 4 V1 H11 V7 H8" stroke="#2d4f73" strokeWidth="1.6" /></svg>
        <X size={12} strokeWidth={3.5} className="text-[#2d4f73]" />
      </div>
      <div className="absolute left-[8px] bottom-[10px]"><Crosshair /></div>
    </div>
  );
}

function StatusBar() {
  return (
    <div className="h-[26px] flex items-center text-[12px] text-[#5a6672]">
      <div className="w-[1190px] pl-[1px] text-[11.5px] shrink-0">Press F1 to get Help.</div>
      <div className="w-[235px] shrink-0 text-[#333]">Scale definition</div>
      <div className="w-[102px] shrink-0 text-[#333]">Scale 1 : 25</div>
      <div className="w-[98px] h-[18px] border-l border-[#ccd2d8] pl-[3px] flex items-center shrink-0">
        Length:<span className="ml-[7px] text-[#222]">mm</span>
      </div>
      <div className="w-[88px] h-[18px] border-l border-[#ccd2d8] pl-[3px] flex items-center shrink-0">
        Angle:<span className="ml-[8px] text-[#222]">0.000</span>
      </div>
      <div className="w-[50px] h-[18px] border-l border-[#ccd2d8] pl-[3px] flex items-center text-[#222] shrink-0">deg</div>
      <div className="w-[50px] h-[18px] border-l border-[#ccd2d8] pl-[4px] flex items-center shrink-0">
        %:<span className="ml-[8px]">1</span>
      </div>
      <div className="flex-1 h-[18px] border-l border-[#ccd2d8] pl-[4px] flex items-center text-[#222]">
        <svg width="15" height="18" viewBox="0 0 15 18" fill="none" className="mr-[4px]">
          <path d="M1 2 H14 V14 H9 L7.5 16 L6 14 H1 Z" stroke="#4a5560" />
          <path d="M7.5 4 V10 M7.5 11.5 V13" stroke="#c22" strokeWidth="1.6" />
        </svg>
        Notifications
      </div>
    </div>
  );
}

export default function App() {
  return (
    <div className="relative w-[1920px] h-[1080px] overflow-hidden bg-white flex flex-col font-['Roboto',sans-serif]">
      <TitleBar />
      <Ribbon />
      <div className="h-[868px] flex bg-[#f3f6fa] shrink-0">
        <LeftPanel />
        <Canvas />
      </div>
      <div className="h-[27px] flex items-center bg-[#e2eaf5] border-y border-[#a9b2bc] shrink-0">
        <div className="ml-[5px] w-[394px] h-full flex items-center bg-white border-x border-[#a9b2bc] pl-[7px] text-[12.85px] font-medium text-black whitespace-nowrap">
          Click to select; Ctrl+click to add; Shift+click to select entity group
        </div>
      </div>
      <StatusBar />
      <div className="absolute left-[429px] top-[1000px] w-[1062px] h-[58px] flex items-center justify-center bg-[#3e4042]/95 text-white text-[48px] leading-none whitespace-nowrap">
        Create section and label in different drawing files
      </div>
    </div>
  );
}
